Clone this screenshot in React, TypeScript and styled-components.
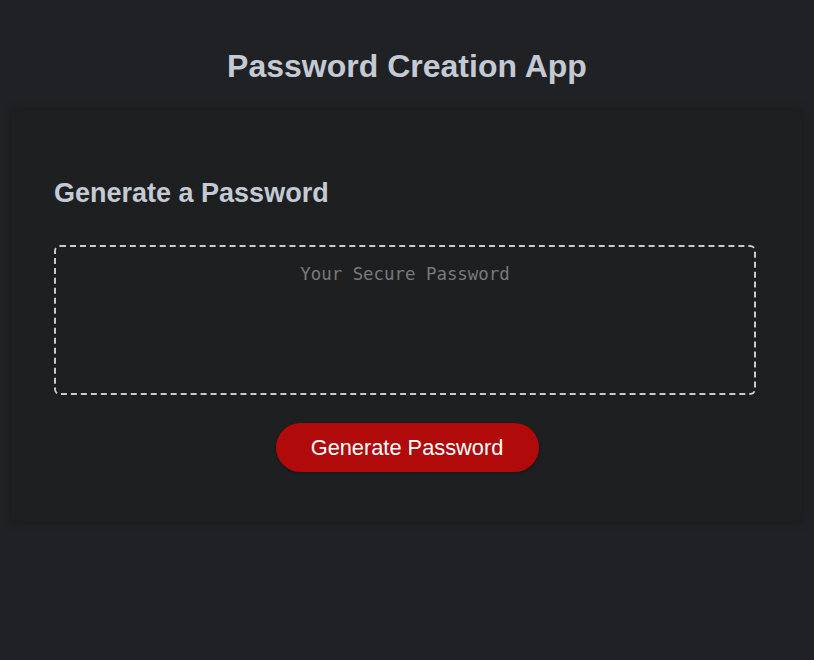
import React from "react";
import styled, { createGlobalStyle } from "styled-components";

const Global = createGlobalStyle`
  html, body { margin: 0; padding: 0; background: #202124; }
  body { font-family: "Liberation Sans", Arial, sans-serif; }
  * { box-sizing: border-box; }
`;

const Page = styled.div`
  min-height: 660px;
  background: #202124;
  padding: 0 12px;
  display: flex;
  flex-direction: column;
`;

const Title = styled.h1`
  margin: 0;
  padding-top: 47px;
  height: 110px;
  text-align: center;
  font-size: 32px;
  font-weight: 700;
  line-height: 38px;
  color: #c4cad3;
`;

const Card = styled.section`
  background: #1e1f21;
  box-shadow: 0 0 10px rgba(0, 0, 0, 0.25);
  border-radius: 4px;
  padding: 66px 42px 50px 42px;
  display: flex;
  flex-direction: column;
`;

const CardTitle = styled.h2`
  margin: 0 0 35px;
  font-size: 27px;
  font-weight: 700;
  line-height: 34px;
  color: #c4cad3;
`;

const Output = styled.textarea`
  width: calc(100% - 4px);
  height: 150px;
  resize: none;
  background: transparent;
  border: 2px dashed #c8cbcf;
  border-radius: 6px;
  padding: 17px 16px 16px;
  text-align: center;
  font-family: "DejaVu Sans Mono", "Liberation Mono", monospace;
  font-size: 17.4px;
  color: #d0d0d0;
  outline: none;
  &::placeholder { color: #777a7d; }
`;

const Actions = styled.div`
  display: flex;
  justify-content: center;
  margin-top: 28px;
`;

const Button = styled.button`
  width: 263px;
  height: 49px;
  border: none;
  border-radius: 25px;
  background: #b00a0a;
  color: #fff;
  font-family: "Liberation Sans", Arial, sans-serif;
  font-size: 21.8px;
  cursor: pointer;
  box-shadow: 0 1px 3px rgba(0,0,0,0.3);
`;

export default function App() {
  return (
    <>
      <Global />
      <Page>
        <Title>Password Creation App</Title>
        <Card>
          <CardTitle>Generate a Password</CardTitle>
          <Output readOnly placeholder="Your Secure Password" />
          <Actions>
            <Button>Generate Password</Button>
          </Actions>
        </Card>
      </Page>
    </>
  );
}
